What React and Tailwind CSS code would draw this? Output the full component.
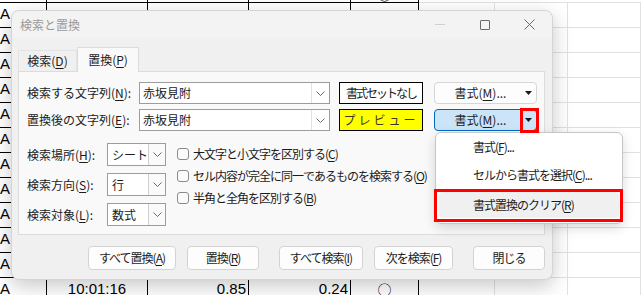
import React from 'react';

const JP = "font-['Noto_Sans_CJK_JP','Noto_Sans',sans-serif]";

// spreadsheet rows behind the dialog
const rows = [
  ['A', '10:00:44', '0.91', '0.33', '○'],
  ['A', '', '', '', ''],
  ['A', '10:00:48', '0.88', '0.31', '○'],
  ['A', '10:00:50', '0.87', '0.29', '○'],
  ['A', '10:00:52', '0.90', '0.30', '○'],
  ['A', '10:00:54', '0.86', '0.27', '○'],
  ['A', '10:00:56', '0.89', '0.28', '○'],
  ['A', '10:00:58', '0.84', '0.26', '○'],
  ['A', '10:01:00', '0.88', '0.25', '○'],
  ['A', '10:01:04', '0.86', '0.27', '○'],
  ['A', '10:01:08', '0.87', '0.26', '○'],
  ['A', '10:01:12', '0.85', '0.25', '○'],
  ['A', '10:01:16', '0.85', '0.24', '○'],
];

const U = ({ c }) => <span className="underline underline-offset-[2px] decoration-1">{c}</span>;

const Chevron = () => (
  <svg width="9" height="5" viewBox="0 0 9 5">
    <path d="M0.5 0.5 L4.5 4.5 L8.5 0.5" stroke="#6b6b6b" strokeWidth="1" fill="none" />
  </svg>
);

const Tri = () => (
  <svg width="7" height="4" viewBox="0 0 7 4">
    <path d="M0 0 L7 0 L3.5 4 Z" fill="#1a1a1a" />
  </svg>
);

function Combo({ value }) {
  return (
    <div className="w-[191px] h-[22px] bg-white border border-[#9c9c9c] flex items-center">
      <span className="pl-[3px] text-[12px] leading-[16px] flex-1">{value}</span>
      <div className="w-[18px] h-full border-l border-[#e2e2e2] flex items-center justify-center">
        <Chevron />
      </div>
    </div>
  );
}

function Select({ value }) {
  return (
    <div className="w-[59px] h-[23px] bg-white border border-[#9c9c9c] flex items-center">
      <span className="pl-[4px] text-[12px] leading-[16px] flex-1">{value}</span>
      <div className="w-[17px] h-full border-l border-[#cfcfcf] bg-[#fafafa] flex items-center justify-center">
        <Chevron />
      </div>
    </div>
  );
}

function Check({ children }) {
  return (
    <div className="h-[22px] flex items-center">
      <div className="w-[12px] h-[12px] rounded-[3px] border border-[#8a8a8a] bg-[#fbfbfb]" />
      <span className="ml-[4px] text-[12px] leading-[16px] tracking-[-1px]">{children}</span>
    </div>
  );
}

export default function App() {
  return (
    <div className={`relative w-[642px] h-[295px] overflow-hidden bg-white text-[#1b1b1b] ${JP}`}>
      {/* sheet */}
      <div className="flex flex-col -mt-[22px] font-['Liberation_Sans',sans-serif] text-[15px] leading-none text-black">
        {rows.map((r, i) => (
          <div key={i} className={`flex h-[25px] ${i === 0 ? 'items-end' : ''}`}>
            <div className="w-[47px] border-b border-r border-black flex items-center pb-[4px]">{r[0]}</div>
            <div className={`w-[101px] border-b border-r border-black flex justify-center ${i === 0 ? 'h-full items-end pb-[1px]' : 'items-center pb-[3px]'}`}>{r[1]}</div>
            <div className={`w-[101px] border-b border-r border-black flex justify-end pr-[2px] ${i === 0 ? 'h-full items-end pb-[1px]' : 'items-center pb-[3px]'}`}>{r[2]}</div>
            <div className={`w-[102px] border-b border-r border-black flex justify-end pr-[2px] ${i === 0 ? 'h-full items-end pb-[1px]' : 'items-center pb-[3px]'}`}>{r[3]}</div>
            <div className={`w-[68px] border-b border-r border-black flex justify-center text-[14px] ${JP} ${i === 0 ? 'h-full items-end pb-[1px]' : 'items-center pb-[3px]'}`}>{r[4]}</div>
            <div className="w-[76px] border-b border-r border-[#e1e1e1]" />
            <div className="w-[73px] border-b border-r border-[#e1e1e1]" />
            <div className="w-[73px] border-b border-r border-[#e1e1e1]" />
          </div>
        ))}
      </div>

      {/* dialog window */}
      <div className="absolute left-[11px] top-[10px] w-[542px] h-[270px] rounded-[8px] bg-[#f0f0f0] border border-[#d4d4d4] shadow-[0_6px_20px_rgba(0,0,0,0.22)] flex flex-col">
        <div className="h-[27px] flex items-center pl-[8px] rounded-t-[8px] bg-[#f3f3f3]">
          <span className="text-[12px] leading-[16px] text-[#9b9b9b]">検索と置換</span>
          <div className="ml-auto flex h-full">
            <div className="w-[45px] flex items-center justify-center">
              <div className="w-[10px] h-px bg-[#cfcfcf]" />
            </div>
            <div className="w-[45px] flex items-center justify-center">
              <div className="w-[10px] h-[10px] border border-[#6a6a6a] rounded-[1px]" />
            </div>
            <div className="w-[45px] flex items-center justify-center">
              <svg width="11" height="11" viewBox="0 0 11 11">
                <path d="M0.5 0.5 L10.5 10.5 M10.5 0.5 L0.5 10.5" stroke="#6a6a6a" strokeWidth="1" />
              </svg>
            </div>
          </div>
        </div>

        {/* tabs */}
        <div className="ml-[6px] mt-[9px] flex items-end h-[24px]">
          <div className="w-[59px] h-[21px] flex items-center justify-center text-[12px] leading-[16px] border border-b-0 border-[#e3e3e3]">
            検索(<U c="D" />)
          </div>
          <div className="relative z-10 w-[62px] h-[25px] -mb-px flex items-center justify-center text-[12px] leading-[16px] bg-[#f9f9f9] border border-b-0 border-[#dcdcdc]">
            置換(<U c="P" />)
          </div>
        </div>

        {/* tab panel */}
        <div className="ml-[6px] w-[527px] h-[164px] bg-[#f9f9f9] border border-[#dcdcdc] pl-[8px] pt-[10px]">
          <div className="flex items-center h-[22px]">
            <span className="w-[112px] text-[12px] leading-[16px]">検索する文字列(<U c="N" />):</span>
            <Combo value="赤坂見附" />
            <div className="ml-[9px] w-[84px] h-[22px] bg-white border border-black flex items-center justify-center text-[12px] leading-[16px] tracking-[-2px]">
              書式セットなし
            </div>
            <div className="ml-[11px] w-[103px] h-[22px] bg-[#fdfdfd] border border-[#d6d6d6] rounded-[4px] flex items-center">
              <span className="flex-1 text-center pl-[6px] text-[12px] leading-[16px]">書式(<U c="M" />)...</span>
              <div className="w-[16px] flex justify-center"><Tri /></div>
            </div>
          </div>

          <div className="flex items-center h-[22px] mt-[5px]">
            <span className="w-[112px] text-[12px] leading-[16px]">置換後の文字列(<U c="E" />):</span>
            <Combo value="赤坂見附" />
            <div className="ml-[9px] w-[84px] h-[22px] bg-[#ffff00] border border-black flex items-center justify-center text-[12px] leading-[16px] tracking-[3px] text-[#3a3a1a]">
              プレビュー
            </div>
            <div className="ml-[11px] w-[103px] h-[22px] bg-[#cce4f7] border border-[#0067c0] rounded-[4px] flex items-center">
              <span className="flex-1 text-center pl-[6px] text-[12px] leading-[16px]">書式(<U c="M" />)...</span>
              <div className="w-[16px] h-full border-l border-[#9fc3df] flex items-center justify-center"><Tri /></div>
            </div>
          </div>

          <div className="flex mt-[12px]">
            <div className="flex flex-col gap-[7px]">
              <div className="flex items-center h-[23px]">
                <span className="w-[80px] text-[12px] leading-[16px]">検索場所(<U c="H" />):</span>
                <Select value="シート" />
              </div>
              <div className="flex items-center h-[23px]">
                <span className="w-[80px] text-[12px] leading-[16px]">検索方向(<U c="S" />):</span>
                <Select value="行" />
              </div>
              <div className="flex items-center h-[23px]">
                <span className="w-[80px] text-[12px] leading-[16px]">検索対象(<U c="L" />):</span>
                <Select value="数式" />
              </div>
            </div>
            <div className="ml-[11px] flex flex-col">
              <Check>大文字と小文字を区別する(<U c="C" />)</Check>
              <Check>セル内容が完全に同一であるものを検索する(<U c="O" />)</Check>
              <Check>半角と全角を区別する(<U c="B" />)</Check>
            </div>
          </div>
        </div>

        {/* bottom buttons */}
        <div className="mt-[11px] ml-[76px] flex text-[12px] leading-[16px] tracking-[-1px]">
          <div className="w-[88px] h-[24px] bg-[#fdfdfd] border border-[#d3d3d3] rounded-[4px] flex items-center justify-center">すべて置換(<U c="A" />)</div>
          <div className="ml-[11px] w-[72px] h-[24px] bg-[#fdfdfd] border border-[#d3d3d3] rounded-[4px] flex items-center justify-center">置換(<U c="R" />)</div>
          <div className="ml-[20px] w-[84px] h-[24px] bg-[#fdfdfd] border border-[#d3d3d3] rounded-[4px] flex items-center justify-center">すべて検索(<U c="I" />)</div>
          <div className="ml-[11px] w-[79px] h-[24px] bg-[#fdfdfd] border border-[#d3d3d3] rounded-[4px] flex items-center justify-center">次を検索(<U c="F" />)</div>
          <div className="ml-[20px] w-[72px] h-[24px] bg-[#fdfdfd] border border-[#d3d3d3] rounded-[4px] flex items-center justify-center">閉じる</div>
        </div>
      </div>

      {/* format dropdown menu */}
      <div className="absolute left-[435px] top-[132px] w-[188px] h-[92px] bg-white border border-[#c6c6c6] rounded-[6px] shadow-[0_4px_12px_rgba(0,0,0,0.15)] flex flex-col text-[12px] leading-[16px] tracking-[-1px]">
        <div className="h-[28px] flex items-center pl-[37px]">書式(<U c="F" />)...</div>
        <div className="h-[28px] flex items-center pl-[37px]">セルから書式を選択(<U c="C" />)...</div>
        <div className="mt-[3px] mx-[3px] h-[26px] bg-[#f0f0f0] rounded-[4px] flex items-center pl-[34px]">書式置換のクリア(<U c="R" />)</div>
      </div>

      {/* red highlight boxes */}
      <div className="absolute left-[520px] top-[108px] w-[19px] h-[25px] border-[3px] border-[#ff0000]" />
      <div className="absolute left-[434px] top-[189px] w-[189px] h-[33px] border-[3px] border-[#ff0000]" />
    </div>
  );
}
